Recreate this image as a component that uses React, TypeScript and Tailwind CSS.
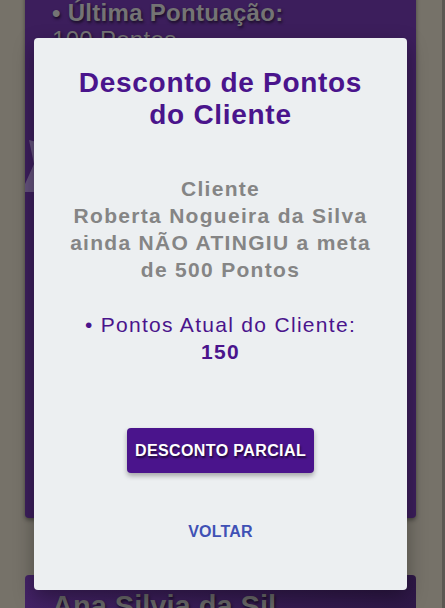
export default function App() {
  return (
    <div
      className="relative h-[608px] w-[445px] overflow-hidden bg-[#767269]"
      style={{ fontFamily: '"Liberation Sans", Arial, sans-serif' }}
    >
      {/* page behind the dialog, already dimmed by the backdrop */}
      <div className="flex flex-col gap-[57px] pl-[25px] pr-[29px] pt-0">
        <div className="relative -mt-[40px] h-[558px] rounded-b-[4px] bg-[#3c1e5c] shadow-[0_2px_4px_rgba(0,0,0,0.4)]">
          <div className="px-[27px] pt-[39px] text-[24px] leading-[27px] tracking-[0.3px] text-[#747474] [text-shadow:1px_2px_3px_rgba(0,0,0,0.6)]">
            <p className="font-bold">• Última Pontuação:</p>
            <p>100 Pontos</p>
          </div>
          <svg className="absolute left-0 top-[180px]" width="12" height="52" viewBox="0 0 12 52">
            <path d="M4 0 L12 2 L12 52 L0 52 L0 44 L9 24 Z" fill="#6a5a80" opacity="0.85" />
          </svg>
        </div>
        <div className="h-[80px] rounded-t-[4px] bg-gradient-to-r from-[#432266] to-[#2f1848]">
          <p className="px-[27px] pt-[10px] text-[29px] font-bold text-[#6a6a6a] [text-shadow:1px_2px_3px_rgba(0,0,0,0.6)]">
            Ana Silvia da Sil
          </p>
        </div>
      </div>
      <div className="absolute right-0 top-0 h-full w-[3px] bg-[#5b5852]" />

      {/* dialog */}
      <div className="absolute left-[34px] top-[38px] flex h-[552px] w-[373px] flex-col items-center rounded-[4px] bg-[#eceff1] shadow-[0_8px_20px_rgba(0,0,0,0.35)]">
        <h2 className="mt-[29px] text-center text-[28px] font-bold leading-[32px] tracking-[0.7px] text-[#4a148c]">
          Desconto de Pontos
          <br />
          do Cliente
        </h2>
        <p className="mt-[44px] text-center text-[21px] font-bold leading-[27px] tracking-[1.3px] text-[#858585]">
          Cliente
          <br />
          Roberta Nogueira da Silva
          <br />
          ainda NÃO ATINGIU a meta
          <br />
          de 500 Pontos
        </p>
        <p className="mt-[28px] text-center text-[21px] leading-[27px] tracking-[1.3px] text-[#4a148c]">
          • Pontos Atual do Cliente:
          <br />
          <span className="font-bold">150</span>
        </p>
        <button className="mt-[63px] h-[45px] w-[187px] rounded-[4px] bg-[#4a148c] text-[16px] font-bold tracking-[0.4px] text-white shadow-[0_3px_5px_rgba(0,0,0,0.3)] [text-shadow:1px_2px_2px_rgba(0,0,0,0.6)]">
          DESCONTO PARCIAL
        </button>
        <button className="mt-[47px] text-[16px] font-bold tracking-[0.2px] text-[#3f51b5]">VOLTAR</button>
      </div>
    </div>
  );
}
